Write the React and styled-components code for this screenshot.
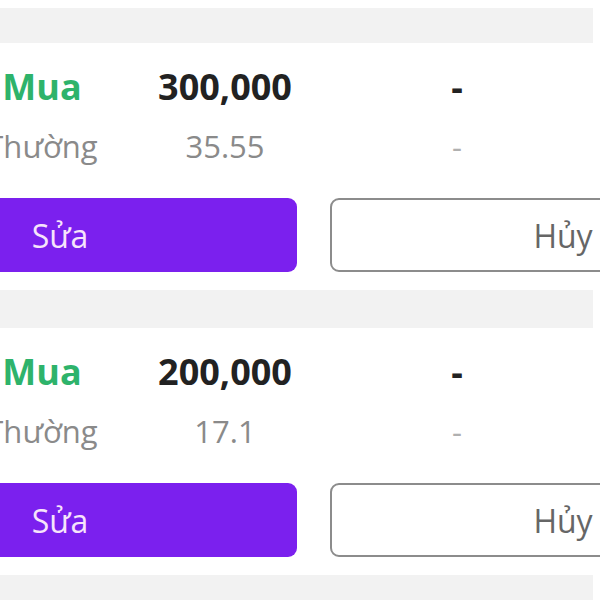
import React from "react";
import styled, { createGlobalStyle } from "styled-components";

const Global = createGlobalStyle`
  html, body { margin: 0; padding: 0; background: #ffffff; overflow: hidden; }
  body { font-family: "Open Sans", "Noto Sans", sans-serif; }
`;

const Screen = styled.div`
  margin-left: -177px;
  width: 1000px;
  padding-top: 8px;
  display: flex;
  flex-direction: column;
`;

const Separator = styled.div`
  width: 770px;
  height: ${(p) => p.$h}px;
  background: #f2f2f2;
`;

const Card = styled.div`
  background: #ffffff;
  padding: 20px 0 18px;
  display: flex;
  flex-direction: column;
`;

const Row = styled.div`
  display: grid;
  grid-template-columns: 220px 146px 318px 1fr;
  padding-left: 109px;
  margin-top: ${(p) => p.$mt || 0}px;
`;

const Cell = styled.div`
  display: flex;
  justify-content: center;
  white-space: nowrap;
  font-size: ${(p) => (p.$main ? 36 : 31)}px;
  line-height: ${(p) => (p.$main ? 47 : 42)}px;
  font-weight: ${(p) => (p.$main ? 700 : 400)};
  color: ${(p) => p.$color};
`;

const Actions = styled.div`
  display: grid;
  grid-template-columns: 474px 466px;
  column-gap: 33px;
  margin-top: 31px;
`;

const Button = styled.button`
  height: 74px;
  box-sizing: border-box;
  border-radius: 9px;
  font-family: "Open Sans", "Noto Sans", sans-serif;
  font-size: 32px;
  font-weight: 400;
  display: flex;
  align-items: center;
  justify-content: center;
  padding: 0;
  background: ${(p) => (p.$primary ? "#7b20ee" : "#ffffff")};
  color: ${(p) => (p.$primary ? "#f6e4fb" : "#666666")};
  border: ${(p) => (p.$primary ? "none" : "2px solid #8c8c8c")};
`;

const orders = [
  { qty: "300,000", price: "35.55" },
  { qty: "200,000", price: "17.1" },
];

function OrderCard({ qty, price }) {
  return (
    <Card>
      <Row>
        <Cell $main $color="#2eb36b">Mua</Cell>
        <Cell $main $color="#222222">{qty}</Cell>
        <Cell $main $color="#222222">-</Cell>
      </Row>
      <Row $mt={15}>
        <Cell $color="#8a8a8a">Thường</Cell>
        <Cell $color="#8a8a8a">{price}</Cell>
        <Cell $color="#b0b0b0">-</Cell>
      </Row>
      <Actions>
        <Button $primary>Sửa</Button>
        <Button>Hủy</Button>
      </Actions>
    </Card>
  );
}

export default function App() {
  return (
    <>
      <Global />
      <Screen>
        <Separator $h={35} />
        <OrderCard {...orders[0]} />
        <Separator $h={38} />
        <OrderCard {...orders[1]} />
        <Separator $h={30} />
      </Screen>
    </>
  );
}
